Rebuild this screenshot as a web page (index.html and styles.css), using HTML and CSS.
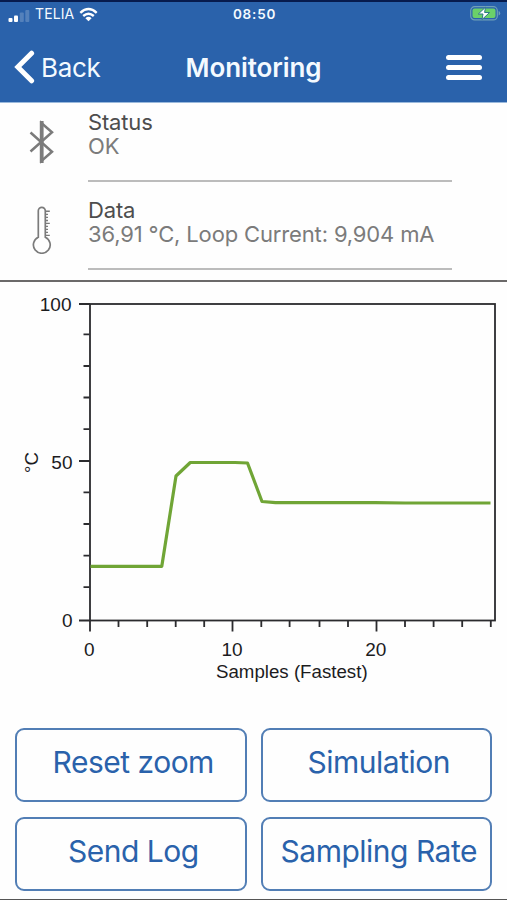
FILE: index.html
```
<!DOCTYPE html>
<html lang="en">
<head>
    <meta charset="UTF-8">
    <meta name="viewport" content="width=device-width, initial-scale=1.0">
    <title>Monitoring</title>
    <link rel="stylesheet" href="styles.css">
</head>
<body>
    <header class="header">
        <div class="status-bar">
            <div class="carrier">
                <svg class="signal" width="22" height="14" viewBox="0 0 22 14">
                    <rect x="0.5" y="9" width="4" height="4" rx="1" fill="#fff"/>
                    <rect x="6" y="6.5" width="4" height="6.5" rx="1" fill="#fff"/>
                    <rect x="11.8" y="3.5" width="4" height="9.5" rx="1" fill="#fff" opacity=".2"/>
                    <rect x="17.3" y="1" width="4" height="12" rx="1" fill="#fff" opacity=".2"/>
                </svg>
                <span class="carrier-name">TELIA</span>
                <svg class="wifi" width="19" height="15" viewBox="0 0 19 15" fill="none" stroke="#fff" stroke-width="2.4">
                    <path d="M1.3 5.8Q9.5 -1.7 17.7 5.8"/>
                    <path d="M4.2 9Q9.5 4.3 14.8 9"/>
                    <path d="M9.5 14.3L6.4 11.2Q9.5 8.5 12.6 11.2Z" fill="#fff" stroke="none"/>
                </svg>
            </div>
            <span class="clock">08:50</span>
            <svg class="battery" width="31" height="15" viewBox="0 0 31 15">
                <rect x="0.7" y="0.7" width="26.6" height="13.2" rx="4" fill="none" stroke="#6fa0b8" stroke-width="1.2"/>
                <rect x="2.5" y="2.5" width="23" height="9.6" rx="2" fill="#6bd169"/>
                <path d="M28.6 5v4.6q1.6-.6 1.6-2.3t-1.6-2.3z" fill="#6fa0b8"/>
                <path d="M15.5 1.2L8.3 8h4.7l-1 5.6L19.6 6.5h-5z" fill="#fff" stroke="#2f7a86" stroke-width="1"/>
            </svg>
        </div>
        <nav class="nav">
            <a class="back" href="#">
                <svg width="22" height="34" viewBox="0 0 22 34" fill="none" stroke="#fff" stroke-width="5">
                    <path d="M17.6 3.2L3.8 17l13.8 13.8" stroke-linecap="round"/>
                </svg>
                <span class="back-label">Back</span>
            </a>
            <h1 class="title">Monitoring</h1>
            <button class="menu" type="button" aria-label="Menu">
                <span></span><span></span><span></span>
            </button>
        </nav>
    </header>

    <section class="info">
        <div class="info-row">
            <div class="info-icon">
                <svg width="28" height="48" viewBox="0 0 28 48" fill="none" stroke="#7b7b7b" stroke-width="2.5">
                    <path d="M2.5 14.5L24 33.7 13.4 43V5L24 14.3 2.5 33.5"/>
                    <path d="M13.7 3v42" stroke-width="3.8"/>
                </svg>
            </div>
            <div class="info-text">
                <div class="label">Status</div>
                <div class="value">OK</div>
            </div>
        </div>
        <div class="info-row">
            <div class="info-icon">
                <svg width="28" height="48" viewBox="0 0 28 48" fill="none" stroke="#7b7b7b" stroke-width="1.7">
                    <path d="M10.3 31.2V4.8a3.5 3.5 0 0 1 7 0v26.4a8.4 8.4 0 1 1-7 0z"/>
                    <path d="M17.2 5.2h4.6M17.2 8.4h2.8M17.2 11.4h2.8M17.2 14.5h2.8M17.2 17.4h4.6M17.2 20.4h2.8M17.2 23.4h2.8M17.2 26.4h2.8M17.2 29.4h4.6" stroke-width="1.4"/>
                </svg>
            </div>
            <div class="info-text">
                <div class="label">Data</div>
                <div class="value">36,91 °C, Loop Current: 9,904 mA</div>
            </div>
        </div>
    </section>

    <svg class="chart" width="507" height="410" viewBox="0 282 507 410">
        <rect class="axis" x="90" y="304" width="405" height="316.5"/>
        <!-- y axis ticks -->
        <path class="axis" d="M79 304h11M79 461h11M79 620.5h11"/>
        <path class="axis" d="M83.5 334.3h6M83.5 366h6M83.5 397.5h6M83.5 429.2h6M83.5 492.4h6M83.5 524h6M83.5 555.6h6M83.5 587.2h6"/>
        <!-- x axis ticks -->
        <path class="axis" d="M90 620v11.5M232.5 620v11.5M376.5 620v11.5"/>
        <path class="axis" d="M118.5 620v7M147.2 620v7M175.7 620v7M204.2 620v7M261.3 620v7M289.6 620v7M319.5 620v7M348 620v7M405 620v7M433.6 620v7M462.2 620v7M490.8 620v7"/>
        <polyline class="series" points="90.5,566.3 161.8,566.3 176,476 190.3,462.5 235,462.5 247.5,463 262,501.5 275.5,502.6 375,502.6 405,503 490.5,503"/>
        <g class="ticks">
            <text x="71.5" y="311" text-anchor="end">100</text>
            <text x="72.5" y="469" text-anchor="end">50</text>
            <text x="72.5" y="627" text-anchor="end">0</text>
            <text x="89.3" y="655.5" text-anchor="middle">0</text>
            <text x="232" y="655.5" text-anchor="middle">10</text>
            <text x="375.7" y="655.5" text-anchor="middle">20</text>
            <text class="axis-title" x="291.8" y="678" text-anchor="middle">Samples (Fastest)</text>
            <text class="axis-title" transform="translate(37.5 462.5) rotate(-90)" text-anchor="middle">°C</text>
        </g>
    </svg>

    <div class="actions">
        <button class="btn" type="button">Reset zoom</button>
        <button class="btn" type="button">Simulation</button>
        <button class="btn" type="button">Send Log</button>
        <button class="btn" type="button">Sampling Rate</button>
    </div>
</body>
</html>
```
FILE: styles.css
```
:root {
    --blue: #2a62ab;
    --grey: #7b7b7b;
    --green: #70a536;
}

* {
    margin: 0;
    padding: 0;
    box-sizing: border-box;
}

body {
    width: 507px;
    height: 900px;
    display: flex;
    flex-direction: column;
    overflow: hidden;
    background-color: #fefefe;
    border-bottom: 1px solid #555;
    font-family: Inter, "Liberation Sans", sans-serif;
}

.header {
    height: 103px;
    flex: none;
    background-color: var(--blue);
    border-top: 2px solid #071b4d;
    border-bottom: 1px solid #9ab9dc;
    color: #f4faff;
}

.status-bar {
    height: 24px;
    display: grid;
    grid-template-columns: 1fr auto 1fr;
    align-items: center;
    padding: 0 6px 0 8px;
}

.carrier {
    display: flex;
    align-items: center;
    gap: 5px;
}

.signal {
    margin-top: 3px;
}

.carrier-name {
    font-size: 14px;
    letter-spacing: 0.1px;
    margin-top: -2px;
}

.clock {
    font-size: 13.5px;
    font-weight: 600;
    letter-spacing: 0.8px;
    margin-top: -1px;
}

.battery {
    justify-self: end;
    margin-top: -2px;
}

.nav {
    height: 76px;
    display: grid;
    grid-template-columns: 1fr auto 1fr;
    align-items: center;
    padding: 6px 14px 0;
}

.back {
    display: flex;
    align-items: center;
    gap: 5px;
    color: inherit;
    text-decoration: none;
}

.back-label {
    font-size: 26px;
    letter-spacing: -0.3px;
    margin-top: 1px;
}

.title {
    font-size: 26px;
    font-weight: 600;
    letter-spacing: -0.1px;
    margin-top: 1px;
}

.menu {
    justify-self: end;
    width: 36px;
    margin-right: 11px;
    display: flex;
    flex-direction: column;
    gap: 5px;
    border: none;
    background: none;
}

.menu span {
    height: 5px;
    border-radius: 2.5px;
    background-color: #fff;
}

.info {
    height: 179px;
    flex: none;
    padding-top: 7px;
    border-bottom: 2px solid #6b6969;
}

.info-row {
    display: flex;
    height: 88px;
}

.info-icon {
    width: 88px;
    padding: 8px 0 0 28px;
}

.info-text {
    width: 364px;
    height: 72px;
    border-bottom: 2px solid #bcbcbc;
}

.label,
.value {
    font-size: 22px;
    line-height: 24px;
    letter-spacing: -0.15px;
    white-space: nowrap;
}

.label {
    color: #4d4d4d;
}

.value {
    color: var(--grey);
}

.chart {
    display: block;
    flex: none;
}

.axis {
    fill: none;
    stroke: #2b2b2e;
    stroke-width: 1.8;
}

.series {
    fill: none;
    stroke: var(--green);
    stroke-width: 3.2;
    stroke-linejoin: round;
}

.ticks {
    font-family: "Liberation Sans", Arial, sans-serif;
    font-size: 19px;
    fill: #1c1c1e;
}

.axis-title {
    font-size: 18.7px;
}

.actions {
    display: grid;
    grid-template-columns: 1fr 1fr;
    grid-auto-rows: 74px;
    gap: 15px 14px;
    padding: 36px 15px 0;
}

.btn {
    padding: 0 0 6px 5px;
    border: 2px solid #527eb5;
    border-radius: 9px;
    background-color: #fefefe;
    color: var(--blue);
    font-family: inherit;
    font-size: 30px;
    letter-spacing: -0.5px;
    white-space: nowrap;
}
```
